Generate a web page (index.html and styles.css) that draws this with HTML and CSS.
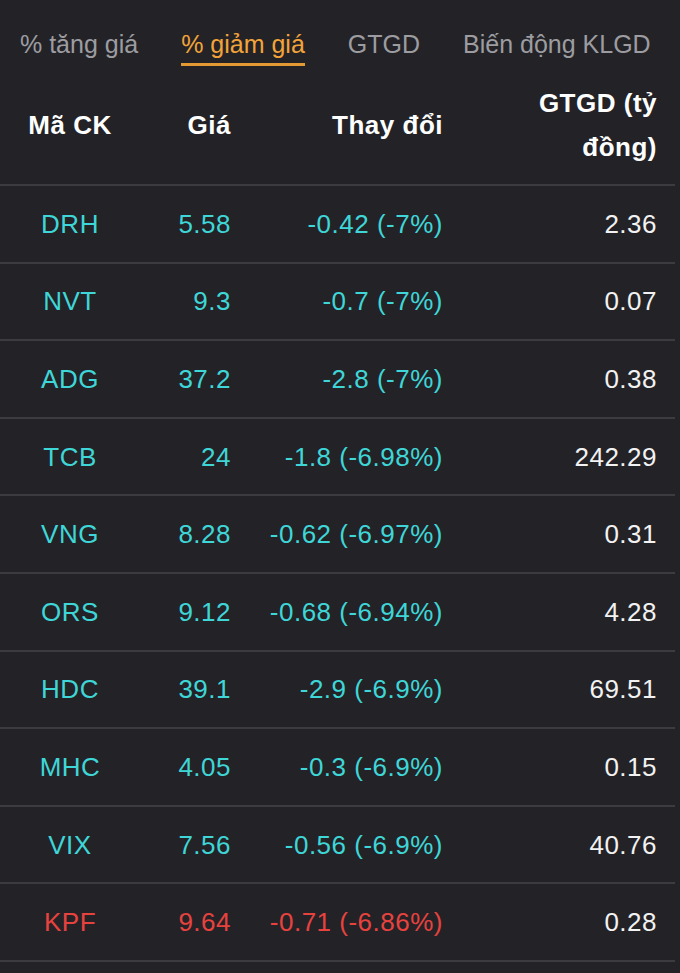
FILE: index.html
```html
<!DOCTYPE html>
<html lang="vi">
<head>
<meta charset="utf-8">
<title>Top cổ phiếu</title>
<link rel="stylesheet" href="styles.css">
</head>
<body>
<div class="panel">
  <nav class="tabs">
    <span class="tab">% tăng giá</span>
    <span class="tab active">% giảm giá</span>
    <span class="tab">GTGD</span>
    <span class="tab">Biến động KLGD</span>
  </nav>
  <div class="table">
    <div class="row head">
      <div class="c1">Mã CK</div>
      <div class="c2">Giá</div>
      <div class="c3">Thay đổi</div>
      <div class="c4"><span class="wrap">GTGD (tỷ đồng)</span></div>
    </div>
    <div class="row up"><div class="c1">DRH</div><div class="c2">5.58</div><div class="c3">-0.42 (-7%)</div><div class="c4">2.36</div></div>
    <div class="row up"><div class="c1">NVT</div><div class="c2">9.3</div><div class="c3">-0.7 (-7%)</div><div class="c4">0.07</div></div>
    <div class="row up"><div class="c1">ADG</div><div class="c2">37.2</div><div class="c3">-2.8 (-7%)</div><div class="c4">0.38</div></div>
    <div class="row up"><div class="c1">TCB</div><div class="c2">24</div><div class="c3">-1.8 (-6.98%)</div><div class="c4">242.29</div></div>
    <div class="row up"><div class="c1">VNG</div><div class="c2">8.28</div><div class="c3">-0.62 (-6.97%)</div><div class="c4">0.31</div></div>
    <div class="row up"><div class="c1">ORS</div><div class="c2">9.12</div><div class="c3">-0.68 (-6.94%)</div><div class="c4">4.28</div></div>
    <div class="row up"><div class="c1">HDC</div><div class="c2">39.1</div><div class="c3">-2.9 (-6.9%)</div><div class="c4">69.51</div></div>
    <div class="row up"><div class="c1">MHC</div><div class="c2">4.05</div><div class="c3">-0.3 (-6.9%)</div><div class="c4">0.15</div></div>
    <div class="row up"><div class="c1">VIX</div><div class="c2">7.56</div><div class="c3">-0.56 (-6.9%)</div><div class="c4">40.76</div></div>
    <div class="row down"><div class="c1">KPF</div><div class="c2">9.64</div><div class="c3">-0.71 (-6.86%)</div><div class="c4">0.28</div></div>
  </div>
</div>
</body>
</html>
```

FILE: styles.css
```css
html, body {
  margin: 0;
  padding: 0;
  background: #232327;
}
body {
  font-family: "Liberation Sans", Arial, Helvetica, sans-serif;
  color: #f2f2f2;
  height: 973px;
  overflow: hidden;
}
.panel {
  width: 675px;
}
.tabs {
  display: flex;
  gap: 43px;
  padding: 29px 0 0 20px;
}
.tab {
  font-size: 25px;
  line-height: 30px;
  color: #9c9ca1;
  padding-bottom: 4px;
  border-bottom: 3px solid transparent;
  white-space: nowrap;
}
.tab.active {
  color: #f2a33a;
  border-bottom-color: #e39a35;
}
.table {
  display: flex;
  flex-direction: column;
}
.row {
  display: grid;
  grid-template-columns: 140px 91px 212px 1fr;
  align-items: center;
  padding-right: 18px;
  height: 75.6px;
  border-bottom: 2px solid #3b3b40;
  font-size: 26px;
  line-height: 30px;
  letter-spacing: 0.5px;
  white-space: nowrap;
}
.row.head {
  height: 118px;
  font-weight: bold;
  color: #ffffff;
  line-height: 44px;
}
.c1 { text-align: center; }
.c2, .c3, .c4 { text-align: right; }
.wrap {
  display: inline-block;
  max-width: 140px;
  white-space: normal;
}
.up .c1, .up .c2, .up .c3 { color: #3fd6d8; }
.down .c1, .down .c2, .down .c3 { color: #e8423f; }
.row .c4 { color: #f2f2f2; }
.row.head .c4 { color: #ffffff; }
```
